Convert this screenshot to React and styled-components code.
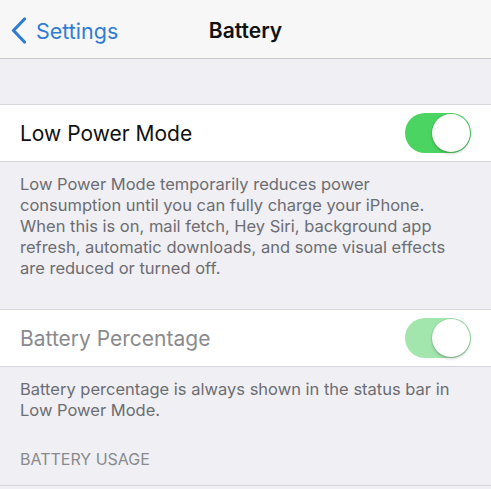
import React from "react";
import styled, { createGlobalStyle } from "styled-components";

const GlobalStyle = createGlobalStyle`
  body {
    margin: 0;
    background: #efeff4;
    font-family: "Inter", "Liberation Sans", sans-serif;
    -webkit-font-smoothing: antialiased;
  }
`;

const Page = styled.div`
  width: 491px;
  height: 489px;
  overflow: hidden;
  background: #efeff4;
`;

const NavBar = styled.div`
  height: 59px;
  box-sizing: border-box;
  padding-top: 3px;
  background: #f7f7f8;
  border-bottom: 1px solid #c8c7cc;
  display: grid;
  grid-template-columns: 1fr auto 1fr;
  align-items: center;
`;

const BackButton = styled.div`
  display: flex;
  align-items: center;
  gap: 9px;
  padding-left: 11px;
  color: #2f7dd3;
  font-size: 21.5px;
`;

const Title = styled.div`
  font-size: 21px;
  font-weight: 600;
  color: #111;
`;

const Spacer = styled.div`
  height: 45px;
`;

const Row = styled.div`
  height: 58px;
  box-sizing: border-box;
  background: #fff;
  border-top: 1px solid #d6d6da;
  border-bottom: 1px solid #d6d6da;
  display: flex;
  align-items: center;
  justify-content: space-between;
  padding: 0 20px;
`;

const Label = styled.div`
  font-size: 21px;
  color: ${(p) => (p.$dim ? "#8a8a8e" : "#111")};
`;

const Track = styled.div`
  width: 66px;
  height: 40px;
  box-sizing: border-box;
  border-radius: 20px;
  background: ${(p) => (p.$dim ? "#a3e6ad" : "#4cd463")};
  position: relative;
`;

const Knob = styled.div`
  position: absolute;
  top: 1px;
  right: 1px;
  width: 38px;
  height: 38px;
  border-radius: 50%;
  background: #fff;
  box-shadow: 0 2px 3px rgba(0, 0, 0, 0.18), 0 0 0 1px rgba(0, 0, 0, 0.06);
`;

const Footnote = styled.div`
  padding: 12px 20px 0;
  font-size: 16.5px;
  line-height: 21px;
  color: #6d6d72;
  height: ${(p) => p.$h}px;
  box-sizing: border-box;
`;

const SectionHeader = styled.div`
  padding: 4px 20px 0;
  height: 57px;
  box-sizing: border-box;
  display: flex;
  align-items: center;
  font-size: 16px;
  color: #8a8a8e;
  border-bottom: 1px solid #d6d6da;
`;

const Toggle = ({ dim }) => (
  <Track $dim={dim}>
    <Knob />
  </Track>
);

export default function App() {
  return (
    <Page>
      <GlobalStyle />
      <NavBar>
        <BackButton>
          <svg width="16" height="27" viewBox="0 0 16 27">
            <path
              d="M13.5 2 L2.5 13.5 L13.5 25"
              fill="none"
              stroke="#2f7dd3"
              strokeWidth="3.2"
              strokeLinecap="round"
              strokeLinejoin="round"
            />
          </svg>
          Settings
        </BackButton>
        <Title>Battery</Title>
        <div />
      </NavBar>
      <Spacer />
      <Row>
        <Label>Low Power Mode</Label>
        <Toggle />
      </Row>
      <Footnote $h={147}>
        Low Power Mode temporarily reduces power consumption until you can
        fully charge your iPhone. When this is on, mail fetch, Hey Siri,
        background app refresh, automatic downloads, and some visual effects
        are reduced or turned off.
      </Footnote>
      <Row>
        <Label $dim>Battery Percentage</Label>
        <Toggle dim />
      </Row>
      <Footnote $h={62}>
        Battery percentage is always shown in the status bar in Low Power
        Mode.
      </Footnote>
      <SectionHeader>BATTERY USAGE</SectionHeader>
    </Page>
  );
}
